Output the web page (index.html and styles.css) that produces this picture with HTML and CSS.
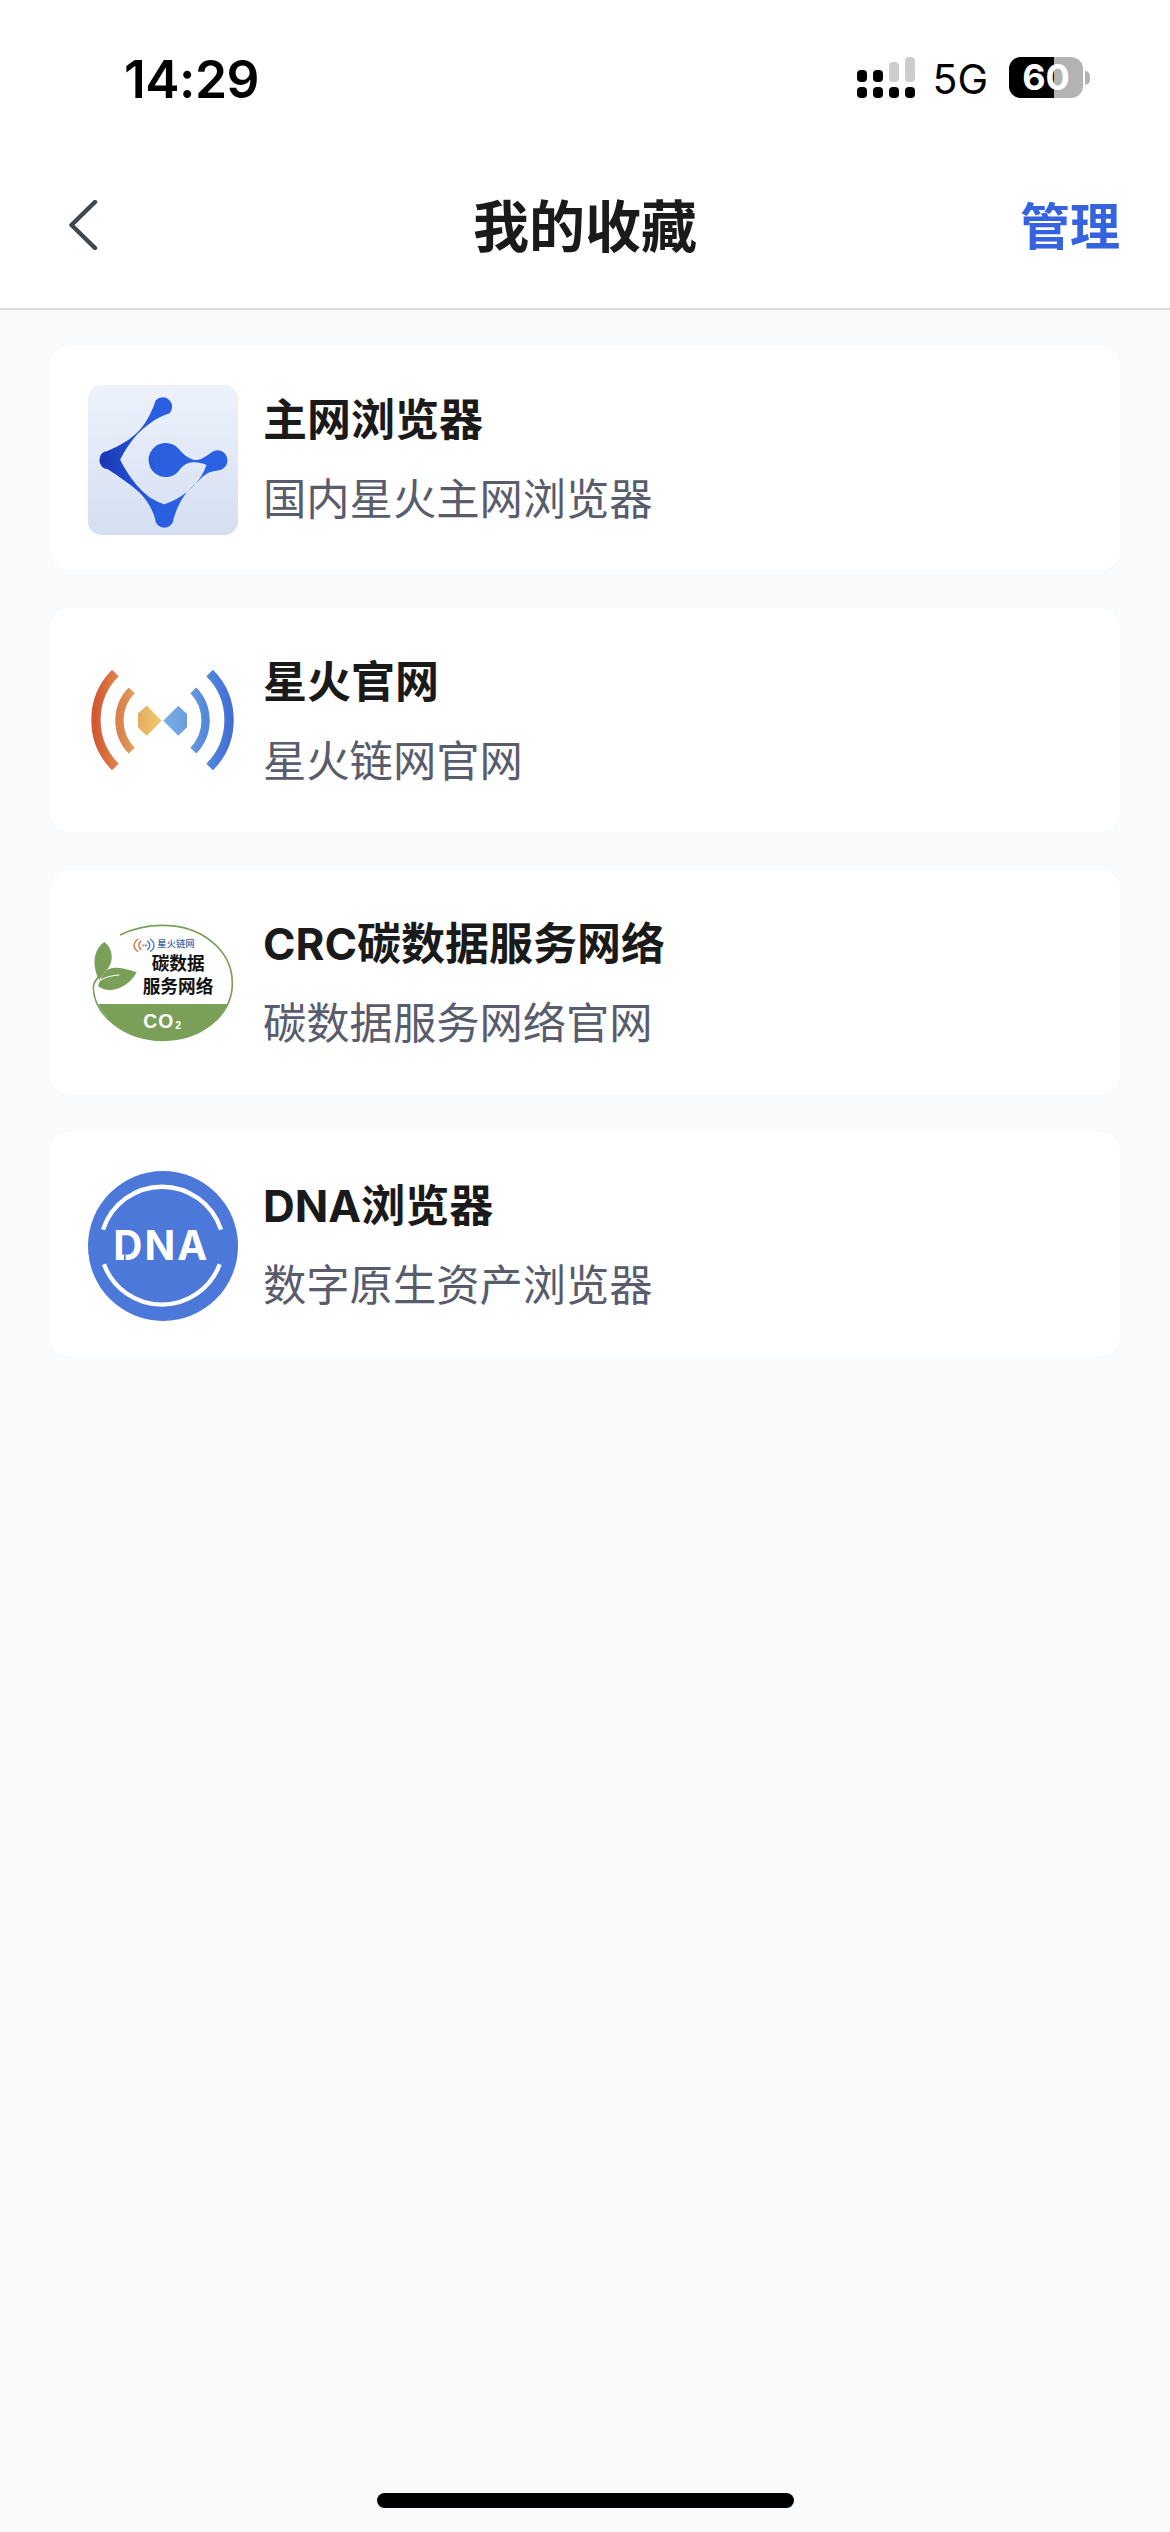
FILE: index.html
```html
<!DOCTYPE html>
<html lang="zh-CN">
<head>
<meta charset="utf-8">
<title>我的收藏</title>
<link rel="stylesheet" href="styles.css">
</head>
<body>
<div class="page">
  <div class="top">
    <div class="status">
      <span class="time">14:29</span>
      <div class="status-right">
        <svg class="signal" width="58" height="41" viewBox="0 0 58 41">
          <rect x="0" y="13" width="10" height="12" rx="4" fill="#000"/>
          <rect x="16" y="13" width="10" height="12" rx="4" fill="#000"/>
          <rect x="32" y="5" width="10" height="20" rx="4" fill="#ccc"/>
          <rect x="48" y="0" width="10" height="25" rx="4" fill="#ccc"/>
          <rect x="0" y="30" width="10" height="11" rx="4" fill="#000"/>
          <rect x="16" y="30" width="10" height="11" rx="4" fill="#000"/>
          <rect x="32" y="30" width="10" height="11" rx="4" fill="#000"/>
          <rect x="48" y="30" width="10" height="11" rx="4" fill="#000"/>
        </svg>
        <span class="net">5G</span>
        <div class="battery"><div class="battery-fill"></div><span class="battery-num">60</span><div class="battery-nub"></div></div>
      </div>
    </div>
    <header class="nav">
      <svg class="back" width="30" height="50" viewBox="0 0 30 50"><path d="M27 2 L3.500 25 L27 48" fill="none" stroke="#3f4750" stroke-width="4.500" stroke-linecap="round" stroke-linejoin="round"/></svg>
      <h1 class="title">我的收藏</h1>
      <span class="manage">管理</span>
    </header>
  </div>
  <main class="list">
    <article class="card">
      <svg class="logo" viewBox="52 42 448 448">
        <defs>
          <linearGradient id="tile" x1="0" y1="0" x2="0" y2="1"><stop offset="0" stop-color="#edf2fb"/><stop offset="1" stop-color="#d5dff2"/></linearGradient>
          <linearGradient id="mark" x1="0" y1="0" x2="1" y2="0"><stop offset="0" stop-color="#1a36b4"/><stop offset=".45" stop-color="#2a60e0"/><stop offset="1" stop-color="#2a62e2"/></linearGradient>
        </defs>
        <rect x="52" y="42" width="448" height="448" rx="40" fill="url(#tile)"/>
        <path fill="url(#mark)" d="M254 88 A28 28 0 1 1 296 126 C262 136 232 158 206 182 C180 208 162 238 148 265 C168 305 192 338 222 366 C240 382 260 392 280 398 C305 390 325 378 347 362 C375 340 395 312 406 281 C385 272 362 270 345 278 C335 283 328 292 322 300 A51 51 0 1 1 322 232 C335 248 350 262 370 266 C385 268 400 258 418 245 A30 30 0 1 1 440 297 C420 298 405 305 392 318 C375 335 358 350 345 365 C325 390 316 415 308 440 A28 28 0 0 1 252 440 C245 415 232 390 208 365 C180 340 145 315 110 293 A24 27 0 0 1 110 239 C145 225 180 205 205 178 C230 150 245 115 254 88 Z"/>
      </svg>
      <div class="info"><h2 class="name">主网浏览器</h2><p class="desc">国内星火主网浏览器</p></div>
    </article>
    <article class="card">
      <svg class="logo" viewBox="54 21 450 450">
        <defs>
          <linearGradient id="lo" x1="0" y1="0" x2="1" y2="0"><stop offset="0" stop-color="#d25a33"/><stop offset="1" stop-color="#e07f4c"/></linearGradient>
          <linearGradient id="li" x1="0" y1="0" x2="1" y2="0"><stop offset="0" stop-color="#db814e"/><stop offset="1" stop-color="#e29a58"/></linearGradient>
          <linearGradient id="ld" x1="0" y1="0" x2="1" y2="0"><stop offset="0" stop-color="#e4ac62"/><stop offset="1" stop-color="#f0cc6a"/></linearGradient>
          <linearGradient id="rd" x1="0" y1="0" x2="1" y2="0"><stop offset="0" stop-color="#79ade4"/><stop offset="1" stop-color="#6a9fdf"/></linearGradient>
          <linearGradient id="ri" x1="0" y1="0" x2="1" y2="0"><stop offset="0" stop-color="#6498dd"/><stop offset="1" stop-color="#5488da"/></linearGradient>
          <linearGradient id="ro" x1="0" y1="0" x2="1" y2="0"><stop offset="0" stop-color="#5284da"/><stop offset="1" stop-color="#4470d4"/></linearGradient>
        </defs>
        <path d="M136 99 A200 200 0 0 0 136 381" fill="none" stroke="url(#lo)" stroke-width="28"/>
        <path d="M185 151 A130 130 0 0 0 185 332" fill="none" stroke="url(#li)" stroke-width="25"/>
        <path d="M419 99 A200 200 0 0 1 419 381" fill="none" stroke="url(#ro)" stroke-width="28"/>
        <path d="M370 151 A130 130 0 0 1 370 332" fill="none" stroke="url(#ri)" stroke-width="25"/>
        <polygon points="230,197 275,242 230,287 204,262 204,220" fill="url(#ld)"/>
        <polygon points="325,197 351,222 351,262 325,287 280,242" fill="url(#rd)"/>
      </svg>
      <div class="info"><h2 class="name">星火官网</h2><p class="desc">星火链网官网</p></div>
    </article>
    <article class="card">
      <svg class="logo" viewBox="54 27 450 450">
        <defs><clipPath id="low"><rect x="54" y="312" width="450" height="165"/></clipPath></defs>
        <path d="M150 105 C190 85 230 76 278 76 C395 76 487 150 487 250 C487 345 395 421 278 421 C165 421 70 345 70 260 C72 245 80 235 92 225" fill="none" stroke="#7a9f58" stroke-width="5"/>
        <ellipse cx="278" cy="249" rx="208" ry="172" fill="#7a9f58" clip-path="url(#low)"/>
        <path d="M103 126 C135 150 130 195 105 215 L88 240 C65 195 70 150 103 126 Z" fill="#7a9f58"/>
        <path d="M200 217 C175 210 140 195 110 210 C95 225 90 245 84 258 C115 285 175 265 200 217 Z" fill="#7a9f58"/>
        <path d="M90 241 C105 232 125 226 148 225" fill="none" stroke="#fff" stroke-width="3"/>
        <path d="M205 117 C188 128 188 146 205 155 M214 122 C204 130 204 142 214 150" fill="none" stroke="#d0703f" stroke-width="4"/>
        <path d="M240 117 C256 128 256 146 240 155 M232 122 C242 130 242 142 232 150" fill="none" stroke="#4a74c8" stroke-width="4"/>
        <circle cx="220" cy="136" r="3.500" fill="#e0a050"/><circle cx="228" cy="136" r="3.500" fill="#6a9fdf"/>
        <text class="crc-small" x="262" y="140">星火链网</text>
        <text class="crc-main" x="245" y="210">碳数据</text>
        <text class="crc-main" x="218" y="280">服务网络</text>
        <text class="crc-co" x="220" y="385">CO</text>
        <text class="crc-two" x="316" y="386">2</text>
      </svg>
      <div class="info"><h2 class="name">CRC碳数据服务网络</h2><p class="desc">碳数据服务网络官网</p></div>
    </article>
    <article class="card">
      <svg class="logo" viewBox="54 60 450 450">
        <circle cx="279" cy="285" r="225" fill="#4c78d9"/>
        <path d="M99 236 A186 186 0 0 1 453 236" fill="none" stroke="#fff" stroke-width="13"/>
        <path d="M102 340 A185 185 0 0 0 449 340" fill="none" stroke="#fff" stroke-width="13"/>
        <text class="dna" x="130" y="328">DNA</text>
        <rect x="162" y="312" width="5" height="18" fill="#4c78d9"/>
      </svg>
      <div class="info"><h2 class="name">DNA浏览器</h2><p class="desc">数字原生资产浏览器</p></div>
    </article>
  </main>
  <div class="home"><div class="home-bar"></div></div>
</div>
</body>
</html>
```
FILE: styles.css
```css
* { box-sizing: border-box; }
html, body { margin: 0; padding: 0; }
body {
  font-family: Inter, "Noto Sans CJK SC", sans-serif;
  background: #f9fafc;
}
.page {
  width: 1170px;
  height: 2532px;
  display: flex;
  flex-direction: column;
  overflow: hidden;
  background: #f9fafc;
}
.top {
  background: #fff;
  height: 310px;
  border-bottom: 2px solid #d8d9db;
  display: flex;
  flex-direction: column;
}
.status {
  height: 125px;
  padding: 50px 0 0 124px;
  display: flex;
  justify-content: space-between;
  align-items: flex-start;
}
.time {
  font-family: Inter, sans-serif;
  font-weight: 600;
  font-size: 51.500px;
  line-height: 58px;
  color: #000;
  letter-spacing: -0.5px;
}
.status-right {
  display: flex;
  align-items: flex-start;
  padding-right: 87px;
}
.signal { display: block; margin-top: 7px; flex: none; }
.net {
  font-family: Inter, sans-serif;
  font-size: 41px;
  line-height: 46px;
  margin: 6px 0 0 17px;
  color: #000;
}
.battery {
  position: relative;
  width: 74px;
  height: 41px;
  margin: 7px 0 0 21px;
  border-radius: 12px;
  background: #b3b3b3;
  display: flex;
  align-items: center;
  justify-content: center;
}
.battery-fill {
  position: absolute;
  left: 0;
  top: 0;
  bottom: 0;
  width: 45px;
  background: #000;
  border-radius: 12px 0 0 12px;
}
.battery-num {
  position: relative;
  font-family: Inter, sans-serif;
  font-weight: 700;
  font-size: 36px;
  line-height: 41px;
  color: #fff;
}
.battery-nub {
  position: absolute;
  right: -7px;
  top: 14px;
  width: 5px;
  height: 14px;
  background: #b3b3b3;
  border-radius: 0 6px 6px 0;
}
.nav {
  flex: 1;
  display: flex;
  align-items: flex-start;
  justify-content: space-between;
  padding: 0 50px 0 68px;
  position: relative;
}
.back { display: block; margin-top: 75px; }
.title {
  position: absolute;
  left: 0;
  right: 0;
  top: 62px;
  margin: 0;
  text-align: center;
  font-size: 56px;
  line-height: 80px;
  font-weight: 700;
  color: #1a1a1a;
}
.manage {
  margin-top: 66px;
  font-size: 50px;
  line-height: 72px;
  font-weight: 700;
  color: #3563e0;
}
.list {
  flex: 1;
  padding: 36px 50px 0;
  display: flex;
  flex-direction: column;
  gap: 38px;
}
.card {
  height: 224px;
  flex: none;
  background: #fff;
  border-radius: 20px;
  padding: 39px 38px 35px;
  display: flex;
  align-items: flex-start;
  gap: 25px;
}
.logo { display: block; width: 150px; height: 150px; flex: none; }
.info { display: flex; flex-direction: column; padding-top: 5px; }
.name {
  margin: 0;
  font-size: 44px;
  line-height: 60px;
  font-weight: 700;
  color: #1a1a1a;
}
.desc {
  margin: 19px 0 0;
  font-size: 43.300px;
  line-height: 60px;
  font-weight: 400;
  color: #585c6c;
}
.crc-small { font-size: 28px; font-weight: 500; fill: #3f5ea0; font-family: "Noto Sans CJK SC", sans-serif; }
.crc-main { font-size: 53px; font-weight: 700; fill: #111; font-family: "Noto Sans CJK SC", sans-serif; }
.crc-co { font-size: 58px; font-weight: 700; fill: #fff; font-family: "Liberation Sans", sans-serif; letter-spacing: 3px; }
.crc-two { font-size: 32px; font-weight: 700; fill: #fff; font-family: "Liberation Sans", sans-serif; }
.dna { font-size: 121px; font-weight: 700; fill: #fff; font-family: Inter, sans-serif; letter-spacing: 6px; }
.home {
  height: 39px;
  flex: none;
  display: flex;
  justify-content: center;
  align-items: flex-start;
}
.home-bar { width: 417px; height: 15px; border-radius: 8px; background: #000; }
```
